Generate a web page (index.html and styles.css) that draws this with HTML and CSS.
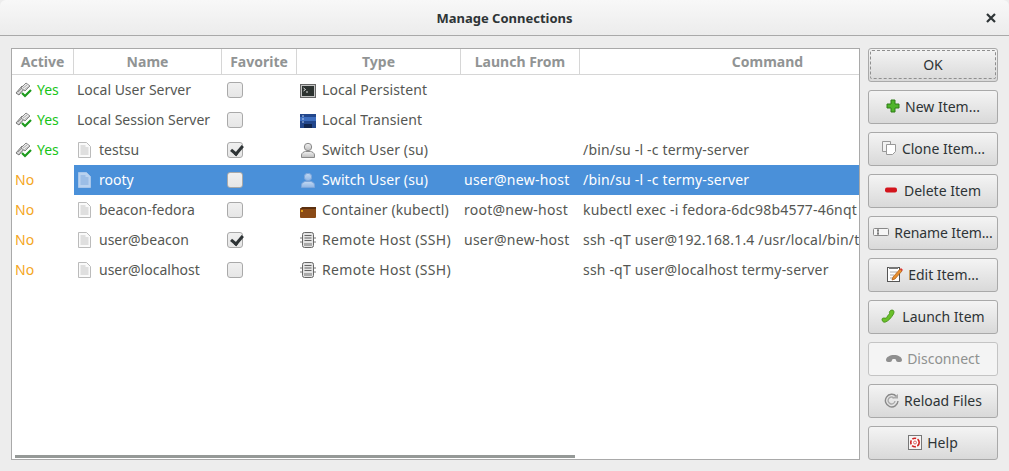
FILE: index.html
```html
<!DOCTYPE html>
<html lang="en">
<head>
	<meta charset="utf-8"/>
	<title>Manage Connections</title>
	<link rel="stylesheet" href="styles.css">
</head>

<body>
	<svg class="defs" width="0" height="0">
		<defs>
			<linearGradient id="g-user" x1="0" y1="0" x2="0" y2="1">
				<stop offset="0" stop-color="#f2f2f2"/>
				<stop offset="1" stop-color="#bdbdbd"/>
			</linearGradient>
			<linearGradient id="g-user-sel" x1="0" y1="0" x2="0" y2="1">
				<stop offset="0" stop-color="#c3d9f3"/>
				<stop offset="1" stop-color="#8fb5e4"/>
			</linearGradient>
			<symbol id="i-active" viewBox="0 0 18 16">
				<path d="M1 11l6-7 3 2-6 7z" fill="#d8d8d8" stroke="#777"/>
				<path d="M3 10l5-5M4.500 11.500l5-5" stroke="#999"/>
				<path d="M6 6l5-5 4 3-5 5z" fill="#eee" stroke="#888"/>
				<path d="M8 6l4-3M9.500 7.500l4-3" stroke="#aaa"/>
				<path d="M7 11l3 3 6-6" fill="none" stroke="#1c9a1c" stroke-width="2.200"/>
			</symbol>
			<symbol id="i-doc" viewBox="0 0 13 16">
				<path d="M.5 .5h8l4 4v11H.5z" fill="#fafafa" stroke="#bbb"/>
				<path d="M2.500 4h5M2.500 6h8M2.500 8h8M2.500 10h8M2.500 12h8" stroke="#c4c4c4"/>
			</symbol>
			<symbol id="i-doc-sel" viewBox="0 0 13 16">
				<path d="M.5 .5h8l4 4v11H.5z" fill="#b9d2ef" stroke="#a6c5ea"/>
				<path d="M2.500 4h5M2.500 6h8M2.500 8h8M2.500 10h8M2.500 12h8" stroke="#7fa9dd"/>
			</symbol>
			<symbol id="i-term" viewBox="0 0 16 14">
				<rect x=".5" y=".5" width="15" height="13" fill="#c4c4c4" stroke="#666"/>
				<rect x="2" y="2" width="12" height="10" fill="#2c3230"/>
				<path d="M3.500 4l2 1.500-2 1.500M6 8h2" fill="none" stroke="#ddd"/>
			</symbol>
			<symbol id="i-screen" viewBox="0 0 16 14">
				<rect width="16" height="14" fill="#23478c"/>
				<rect y="3" width="16" height="4" fill="#3f6fc0"/>
				<rect x="4" y="10" width="8" height="4" fill="#11264f"/>
				<path d="M2 2h2M2 5h2M2 8h2" stroke="#b6cdf0"/>
			</symbol>
			<symbol id="i-user" viewBox="0 0 16 16">
				<circle cx="8" cy="5" r="3.700" fill="url(#g-user)" stroke="#8a8a8a"/>
				<path d="M1.500 15.500v-2.500c0-2 2.500-3.500 4-3.500h5c1.500 0 4 1.500 4 3.500v2.500z" fill="url(#g-user)" stroke="#8a8a8a"/>
			</symbol>
			<symbol id="i-user-sel" viewBox="0 0 16 16">
				<circle cx="8" cy="5" r="3.700" fill="url(#g-user-sel)" stroke="#7da6db"/>
				<path d="M1.500 15.500v-2.500c0-2 2.500-3.500 4-3.500h5c1.500 0 4 1.500 4 3.500v2.500z" fill="url(#g-user-sel)" stroke="#7da6db"/>
			</symbol>
			<symbol id="i-box" viewBox="0 0 16 11">
				<rect y="1" width="16" height="10" rx="1" fill="#8a4a16"/>
				<path d="M2 0h14v2H0z" fill="#5c3010"/>
				<rect x="1" y="3" width="2" height="2" fill="#e0a020"/>
			</symbol>
			<symbol id="i-host" viewBox="0 0 16 16">
				<path d="M0 6h2M0 10h2M14 6h2M14 10h2" stroke="#777"/>
				<rect x="2.500" y=".5" width="11" height="15" rx="2" fill="#e4e4e4" stroke="#666"/>
				<path d="M4.500 3.500h7M4.500 6h7M4.500 8.500h7" stroke="#666"/>
				<path d="M4 11h8v3H4z" fill="#aaa"/>
			</symbol>
		</defs>
	</svg>

	<div class="window">
		<header class="titlebar">
			<span class="title">Manage Connections</span>
			<svg class="close" width="10" height="10" viewBox="0 0 10 10"><path d="M1 1l8 8M9 1l-8 8" stroke="#2e3436" stroke-width="2.200"/></svg>
		</header>

		<div class="content">
			<div class="list">
				<table class="items">
					<colgroup>
						<col class="c-active"><col class="c-name"><col class="c-fav"><col class="c-type"><col class="c-from"><col class="c-cmd">
					</colgroup>
					<thead>
						<tr><th>Active</th><th>Name</th><th>Favorite</th><th>Type</th><th>Launch From</th><th>Command</th></tr>
					</thead>
					<tbody>
						<tr>
							<td class="yes"><svg class="ico" width="18" height="16"><use href="#i-active"/></svg>Yes</td>
							<td>Local User Server</td>
							<td class="fav"><span class="check"></span></td>
							<td class="type"><svg class="ico" width="16" height="14"><use href="#i-term"/></svg>Local Persistent</td>
							<td></td>
							<td></td>
						</tr>
						<tr>
							<td class="yes"><svg class="ico" width="18" height="16"><use href="#i-active"/></svg>Yes</td>
							<td>Local Session Server</td>
							<td class="fav"><span class="check"></span></td>
							<td class="type"><svg class="ico" width="16" height="14"><use href="#i-screen"/></svg>Local Transient</td>
							<td></td>
							<td></td>
						</tr>
						<tr>
							<td class="yes"><svg class="ico" width="18" height="16"><use href="#i-active"/></svg>Yes</td>
							<td><svg class="ico doc" width="13" height="16"><use href="#i-doc"/></svg>testsu</td>
							<td class="fav"><span class="check on"></span></td>
							<td class="type"><svg class="ico" width="16" height="16"><use href="#i-user"/></svg>Switch User (su)</td>
							<td></td>
							<td class="cmd">/bin/su -l -c termy-server</td>
						</tr>
						<tr class="selected">
							<td class="no">No</td>
							<td><svg class="ico doc" width="13" height="16"><use href="#i-doc-sel"/></svg>rooty</td>
							<td class="fav"><span class="check"></span></td>
							<td class="type"><svg class="ico" width="16" height="16"><use href="#i-user-sel"/></svg>Switch User (su)</td>
							<td class="from">user@new-host</td>
							<td class="cmd">/bin/su -l -c termy-server</td>
						</tr>
						<tr>
							<td class="no">No</td>
							<td><svg class="ico doc" width="13" height="16"><use href="#i-doc"/></svg>beacon-fedora</td>
							<td class="fav"><span class="check"></span></td>
							<td class="type"><svg class="ico" width="16" height="11"><use href="#i-box"/></svg>Container (kubectl)</td>
							<td class="from">root@new-host</td>
							<td class="cmd">kubectl exec -i fedora-6dc98b4577-46nqt</td>
						</tr>
						<tr>
							<td class="no">No</td>
							<td><svg class="ico doc" width="13" height="16"><use href="#i-doc"/></svg>user@beacon</td>
							<td class="fav"><span class="check on"></span></td>
							<td class="type remote"><svg class="ico" width="16" height="16"><use href="#i-host"/></svg>Remote Host (SSH)</td>
							<td class="from">user@new-host</td>
							<td class="cmd">ssh -qT user@192.168.1.4 /usr/local/bin/t</td>
						</tr>
						<tr>
							<td class="no">No</td>
							<td><svg class="ico doc" width="13" height="16"><use href="#i-doc"/></svg>user@localhost</td>
							<td class="fav"><span class="check"></span></td>
							<td class="type remote"><svg class="ico" width="16" height="16"><use href="#i-host"/></svg>Remote Host (SSH)</td>
							<td></td>
							<td class="cmd">ssh -qT user@localhost termy-server</td>
						</tr>
					</tbody>
				</table>
				<div class="scrollbar"></div>
			</div>

			<div class="buttons">
				<button class="btn ok"><span class="focus">OK</span></button>
				<button class="btn">
					<svg width="14" height="14" viewBox="0 0 14 14"><path d="M5 1h4v4h4v4H9v4H5V9H1V5h4z" fill="#4fb52a" stroke="#2f7d16"/></svg>
					New Item...
				</button>
				<button class="btn">
					<svg width="16" height="16" viewBox="0 0 16 16"><path d="M1.500 1.500h8v10h-8z" fill="#f2f2f2" stroke="#999"/><path d="M5.500 4.500h9v7l-3 3h-6z" fill="#fff" stroke="#999"/></svg>
					Clone Item...
				</button>
				<button class="btn wide-gap">
					<svg width="12" height="6" viewBox="0 0 12 6"><rect width="12" height="5" y=".5" rx="2" fill="#d3141c"/></svg>
					Delete Item
				</button>
				<button class="btn tight">
					<svg width="16" height="8" viewBox="0 0 16 8"><rect x=".5" y=".5" width="15" height="7" rx="1" fill="#f6f6f6" stroke="#888"/><path d="M4 2h2M4 6h2M5 2v4" stroke="#555"/></svg>
					Rename Item...
				</button>
				<button class="btn">
					<svg width="16" height="16" viewBox="0 0 16 16"><rect x=".5" y="1.500" width="12" height="14" fill="#fff" stroke="#555"/><path d="M2 1h9v2H2z" fill="#777"/><path d="M3 6h7M3 9h4M3 12h3" stroke="#aaa"/><path d="M6 11l7-8 2 2-7 8-3 1z" fill="#e89030" stroke="#a85810" stroke-width=".7"/><path d="M13 3l1-1 2 2-1 1z" fill="#d33"/></svg>
					Edit Item...
				</button>
				<button class="btn wide-gap">
					<svg width="14" height="14" viewBox="0 0 14 14"><path d="M1.500 12c-1-1.500-.5-3 1-3 2 0 3 .5 3.500-1 1-2 2-2.500 2.500-3.500-.5-1.500.5-3.500 2.500-3.500 2 0 2.500 2 1.500 4-2 3.500-5 7-8 8-1.500.5-2.500 0-3-1z" fill="#6ac02a" stroke="#3e8a12" stroke-width=".8"/></svg>
					Launch Item
				</button>
				<button class="btn" disabled>
					<svg width="16" height="8" viewBox="0 0 16 8"><path d="M0 6c0-3 4-5 8-5s8 2 8 5c0 1-1 2-2 2h-2c-1 0-2-1-2-2 0-1-1-1-2-1s-2 0-2 1c0 1-1 2-2 2H2C1 8 0 7 0 6z" fill="#8f8f8f"/></svg>
					Disconnect
				</button>
				<button class="btn">
					<svg width="15" height="15" viewBox="0 0 15 15"><path d="M12.500 3.500A6.300 6.300 0 1 0 14 8" fill="none" stroke="#8a8a8a" stroke-width="1.400"/><path d="M10 5a3.500 3.500 0 1 0 1 3" fill="none" stroke="#aaa" stroke-width="1.400"/><path d="M8 5.500h6V1z" fill="#aaa"/></svg>
					Reload Files
				</button>
				<button class="btn">
					<svg width="14" height="15" viewBox="0 0 14 15"><rect x=".5" y=".5" width="13" height="14" fill="#f4f4f4" stroke="#777"/><circle cx="7" cy="7.500" r="4.200" fill="#fff" stroke="#d02020" stroke-width="1.600" stroke-dasharray="4 1.500"/><circle cx="7" cy="7.500" r="1.500" fill="#f4f4f4" stroke="#d66"/></svg>
					Help
				</button>
			</div>
		</div>
	</div>
</body>
</html>
```

FILE: styles.css
```css
* {
	box-sizing: border-box;
}
html, body {
	margin: 0;
	height: 100%;
}
body {
	background-color: #ededed;
	color: #2e3436;
	font-family: "Noto Sans", "DejaVu Sans", sans-serif;
	font-size: 14px;
}
.defs {
	display: block;
	height: 0;
}
.window {
	height: 471px;
	display: flex;
	flex-direction: column;
	overflow: hidden;
}
.titlebar {
	height: 36px;
	flex: none;
	display: flex;
	align-items: center;
	justify-content: center;
	position: relative;
	background: linear-gradient(#f8f8f8, #ececec);
	border-bottom: 1px solid #a9a9a9;
	border-radius: 6px 6px 0 0;
}
.title {
	font-weight: 700;
	font-size: 13px;
}
.close {
	position: absolute;
	right: 13px;
	top: 13px;
}
.content {
	flex: 1;
	display: flex;
	gap: 8px;
	padding: 12px 11px 10px 11px;
}
.list {
	width: 849px;
	height: 412px;
	flex: none;
	position: relative;
	background-color: #fff;
	border: 1px solid #a9a9a9;
	overflow: hidden;
}
/* Command column runs past the list edge, the scrollbar shows it */
.items {
	width: 943px;
	table-layout: fixed;
	border-collapse: separate;
	border-spacing: 0;
}
.c-active {width: 62px;}
.c-name {width: 148px;}
.c-fav {width: 75px;}
.c-type {width: 164px;}
.c-from {width: 119px;}
.c-cmd {width: 375px;}
.items th {
	height: 26px;
	padding: 0;
	font-weight: 700;
	color: #919494;
	text-align: center;
	border-right: 1px solid #d6d6d6;
	border-bottom: 1px solid #d6d6d6;
}
.items th:last-child {
	border-right: 0;
}
.items td {
	height: 30px;
	padding: 0 0 2px 3px;
	color: #555753;
	white-space: nowrap;
	overflow: hidden;
}
.ico {
	vertical-align: -3px;
	margin-right: 6px;
}
.doc {
	margin: 0 8px 0 1px;
}
.items .yes {
	color: #18c418;
	padding-left: 3px;
}
.yes .ico {
	margin-right: 4px;
}
.items .no {
	color: #f5a623;
	padding-left: 3px;
}
.items .fav {
	padding: 0 0 0 5px;
}
.items .type {
	letter-spacing: .1px;
}
.items .remote {
	letter-spacing: .35px;
}
.items .from {
	letter-spacing: .25px;
}
.items .cmd {
	letter-spacing: .18px;
}
.check {
	display: block;
	width: 16px;
	height: 16px;
	border: 1px solid #a9a9a9;
	border-radius: 3px;
	background: linear-gradient(#f0f0f0, #e6e6e6);
	position: relative;
}
.check.on::after {
	content: "";
	position: absolute;
	left: 3px;
	top: 2px;
	width: 9px;
	height: 5px;
	border-left: 3px solid #2e3436;
	border-bottom: 3px solid #2e3436;
	transform: rotate(-50deg);
}
.selected td {
	background-color: #4a90d9;
	color: #fff;
}
.items .selected .no {
	background-color: #fff;
	color: #f5a623;
}
.scrollbar {
	position: absolute;
	left: 3px;
	bottom: 1px;
	width: 560px;
	height: 3px;
	background-color: #959997;
}
.buttons {
	width: 130px;
	flex: none;
	display: flex;
	flex-direction: column;
	gap: 8px;
}
.btn {
	height: 34px;
	padding: 0 0 2px;
	display: flex;
	align-items: center;
	justify-content: center;
	gap: 5px;
	font: inherit;
	color: #2e3436;
	background: linear-gradient(#f4f4f4, #d9d9d9);
	border: 1px solid #a9a9a9;
	border-radius: 3px;
}
.wide-gap {
	gap: 7px;
}
.tight {
	letter-spacing: -.1px;
}
.btn:disabled {
	background: #f4f4f4;
	color: #8f9190;
	border-color: #c4c4c4;
}
.ok {
	padding: 1px 1px 2px;
}
.focus {
	flex: 1;
	height: 100%;
	display: flex;
	align-items: center;
	justify-content: center;
	border: 1px dashed #8f8f8f;
	border-radius: 2px;
}
```
